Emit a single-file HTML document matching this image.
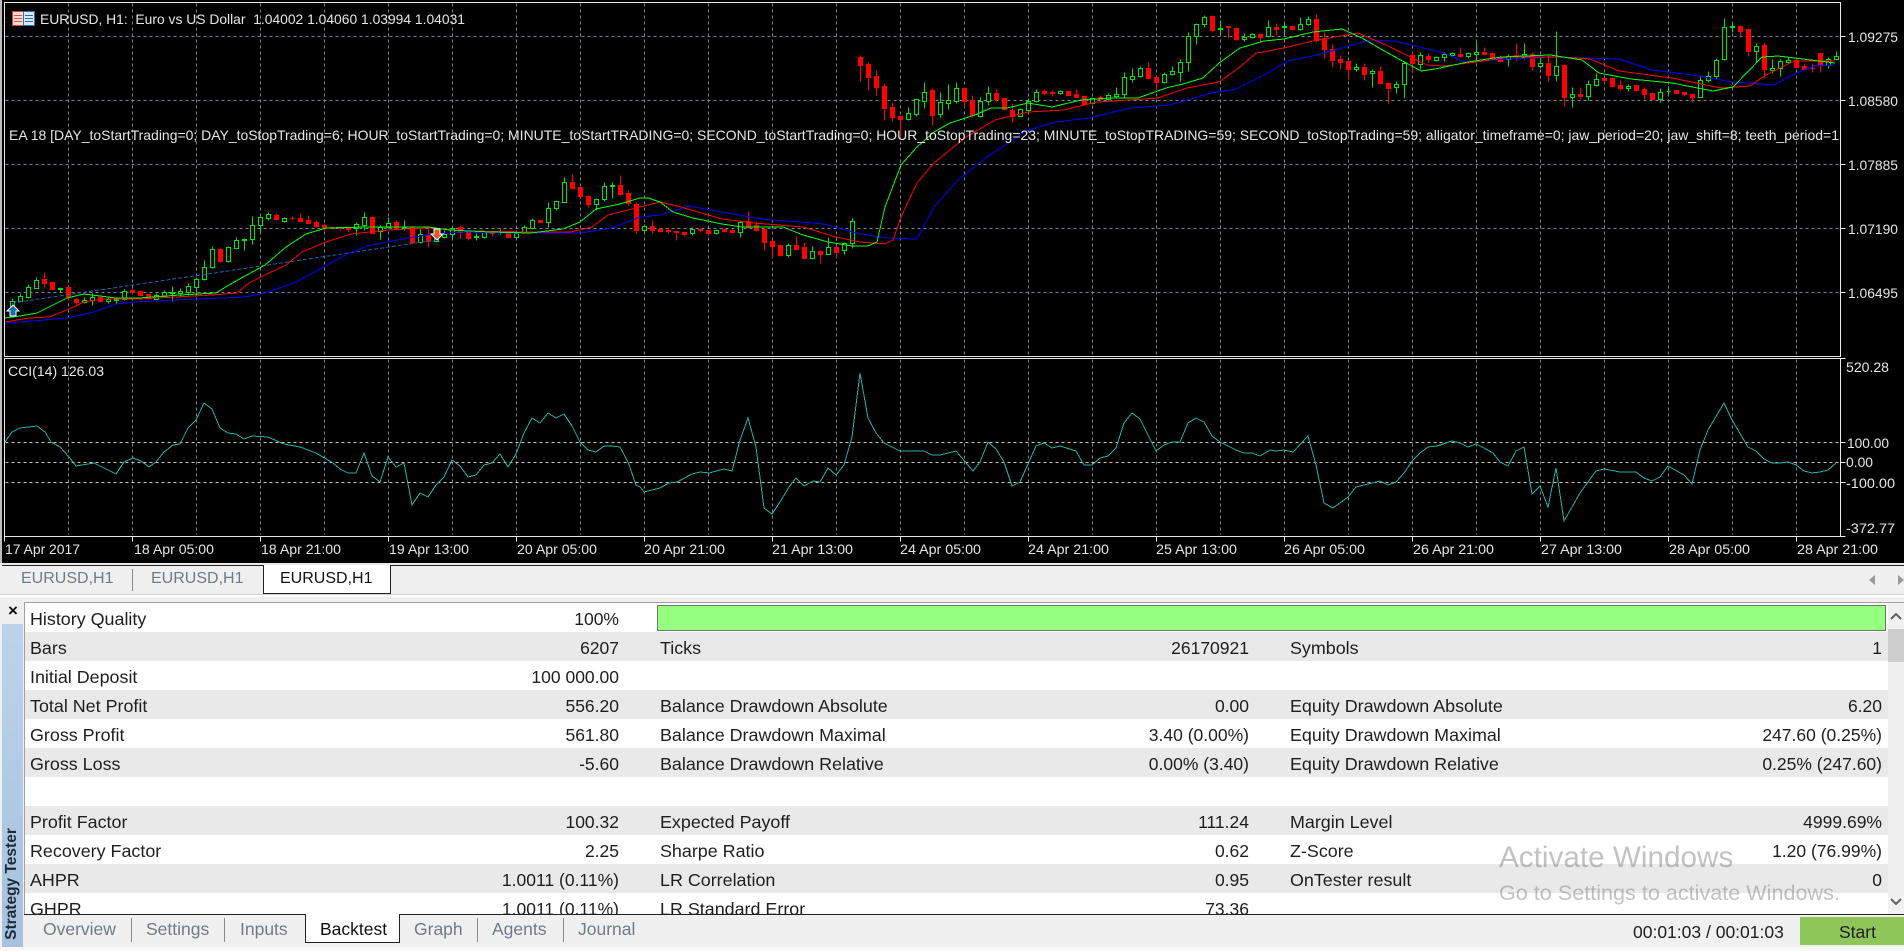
<!DOCTYPE html>
<html lang="en"><head><meta charset="utf-8"><title>Strategy Tester</title>
<style>
html,body{margin:0;padding:0;width:1904px;height:951px;overflow:hidden;background:#f0f0f0;font-family:"Liberation Sans",sans-serif}
#chart{position:absolute;left:0;top:0}
#chart polyline{shape-rendering:crispEdges}
.band{position:absolute;left:25px;width:1863px;height:29px}
.g{background:#e9e9e9}
.t{position:absolute;font-size:17.9px;line-height:20px;color:#1e1e1e;white-space:nowrap}
.r{text-align:right;font-size:17.5px}
.tab{position:absolute;font-size:17.5px;line-height:20px;color:#6f7b87;white-space:nowrap}
.ct{font-size:16px}
.sep{position:absolute;width:1px;background:#8a8a8a}
</style></head><body>
<svg id="chart" width="1904" height="563" viewBox="0 0 1904 563" xmlns="http://www.w3.org/2000/svg" font-family="Liberation Sans, sans-serif" font-size="14" fill="#e6e6e6">
<rect width="1904" height="563" fill="#000"/>
<rect x="0" y="0" width="2" height="563" fill="#bdbdbd"/>
<g transform="translate(.5 .5)" shape-rendering="crispEdges">
<path fill="none" stroke="#778899" stroke-dasharray="3 3" d="M68 3V356M132 3V356M196 3V356M260 3V356M324 3V356M388 3V356M452 3V356M516 3V356M580 3V356M644 3V356M708 3V356M772 3V356M836 3V356M900 3V356M964 3V356M1028 3V356M1092 3V356M1156 3V356M1220 3V356M1284 3V356M1348 3V356M1412 3V356M1476 3V356M1540 3V356M1604 3V356M1668 3V356M1732 3V356M1796 3V356M5 36H1840M5 100H1840M5 164H1840M5 228H1840M5 292H1840"/>
<path fill="none" stroke="#778899" stroke-dasharray="3 3" d="M68 359V534M132 359V534M196 359V534M260 359V534M324 359V534M388 359V534M452 359V534M516 359V534M580 359V534M644 359V534M708 359V534M772 359V534M836 359V534M900 359V534M964 359V534M1028 359V534M1092 359V534M1156 359V534M1220 359V534M1284 359V534M1348 359V534M1412 359V534M1476 359V534M1540 359V534M1604 359V534M1668 359V534M1732 359V534M1796 359V534"/>
<path fill="none" stroke="#c8c8c8" stroke-dasharray="3 3" d="M5 442H1840M5 462H1840M5 482H1840"/>
<path fill="none" stroke="#e8e8e8" d="M4 2H1840V356H4ZM4 358H1840V536H4ZM1840 36h5M1840 100h5M1840 164h5M1840 228h5M1840 292h5M1840 358h5M1840 442h5M1840 462h5M1840 482h5M1840 536h5M4 536v5M132 536v5M260 536v5M388 536v5M516 536v5M644 536v5M772 536v5M900 536v5M1028 536v5M1156 536v5M1284 536v5M1412 536v5M1540 536v5M1668 536v5M1796 536v5"/>
</g>
<g transform="translate(.5 .5)">
<path fill="none" stroke="#00e600" d="M12 298V310M20 293V302M28 284V298M36 277V288M60 287V292M84 297V303M92 293V305M108 297V303M116 298V304M124 289V300M156 293V299M164 290V297M172 286V301M180 288V297M188 283V295M196 277V295M204 260V280M212 246V268M228 246V262M236 237V249M244 238V250M252 216V244M260 215V233M268 212V220M284 217V222M356 222V235M364 212V230M380 225V239M388 217V228M404 220V230M420 228V243M436 231V242M444 230V238M452 227V237M476 233V240M484 231V238M500 229V234M516 230V237M524 225V233M532 218V229M548 202V227M556 200V210M564 177V202M596 198V210M604 182V201M612 182V198M644 224V232M692 227V235M716 229V234M740 220V237M788 243V257M812 246V259M828 237V254M844 242V254M852 218V248M908 107V120M916 98V116M924 82V108M940 92V117M948 84V109M956 82V103M980 97V117M988 86V105M1020 108V117M1028 98V111M1036 89V102M1060 90V94M1092 97V104M1108 93V100M1116 87V97M1124 72V97M1132 68V82M1140 66V77M1164 72V83M1172 66V75M1180 59V81M1188 32V71M1196 23V44M1204 15V27M1220 20V33M1244 33V41M1252 33V38M1268 20V37M1284 23V33M1300 17V30M1308 16V25M1356 63V71M1372 69V87M1396 81V93M1404 62V98M1420 52V69M1436 56V61M1444 52V61M1452 52V57M1468 52V58M1476 42V58M1508 54V66M1524 43V59M1540 57V68M1556 31V81M1572 87V107M1588 80V100M1596 73V86M1628 84V91M1660 88V102M1668 86V94M1700 75V97M1708 71V82M1716 58V78M1724 18V60M1732 21V32M1756 43V62M1772 59V73M1780 59V76M1788 57V63M1828 57V68M1836 51V60"/>
<path fill="#000" stroke="#00e600" d="M10 301h4V307h-4zM18 296h4V301h-4zM26 287h4V297h-4zM34 280h4V288h-4zM58 288h4V289h-4zM82 300h4V302h-4zM90 297h4V300h-4zM106 299h4V301h-4zM114 299h4V300h-4zM122 291h4V299h-4zM154 295h4V299h-4zM162 292h4V296h-4zM170 292h4V293h-4zM178 291h4V293h-4zM186 286h4V292h-4zM194 279h4V287h-4zM202 267h4V279h-4zM210 249h4V267h-4zM226 247h4V261h-4zM234 240h4V248h-4zM242 239h4V240h-4zM250 225h4V239h-4zM258 217h4V225h-4zM266 214h4V218h-4zM282 218h4V221h-4zM354 224h4V228h-4zM362 217h4V225h-4zM378 227h4V231h-4zM386 223h4V227h-4zM402 227h4V228h-4zM418 234h4V242h-4zM434 233h4V241h-4zM442 234h4V237h-4zM450 228h4V234h-4zM474 236h4V237h-4zM482 232h4V237h-4zM498 232h4V232h-4zM514 233h4V237h-4zM522 227h4V232h-4zM530 220h4V228h-4zM546 208h4V222h-4zM554 201h4V208h-4zM562 182h4V202h-4zM594 199h4V204h-4zM602 186h4V199h-4zM610 185h4V186h-4zM642 226h4V230h-4zM690 229h4V233h-4zM714 230h4V233h-4zM738 222h4V232h-4zM786 245h4V255h-4zM810 251h4V258h-4zM826 247h4V254h-4zM842 243h4V250h-4zM850 221h4V243h-4zM906 113h4V119h-4zM914 99h4V114h-4zM922 92h4V101h-4zM938 102h4V114h-4zM946 100h4V103h-4zM954 88h4V101h-4zM978 101h4V116h-4zM986 93h4V101h-4zM1018 109h4V116h-4zM1026 101h4V110h-4zM1034 92h4V101h-4zM1058 91h4V93h-4zM1090 98h4V103h-4zM1106 95h4V99h-4zM1114 94h4V96h-4zM1122 77h4V94h-4zM1130 76h4V79h-4zM1138 68h4V76h-4zM1162 74h4V82h-4zM1170 71h4V74h-4zM1178 62h4V72h-4zM1186 36h4V62h-4zM1194 24h4V36h-4zM1202 17h4V24h-4zM1218 28h4V29h-4zM1242 37h4V39h-4zM1250 34h4V37h-4zM1266 27h4V36h-4zM1282 26h4V27h-4zM1298 24h4V29h-4zM1306 19h4V24h-4zM1354 67h4V69h-4zM1370 71h4V73h-4zM1394 84h4V87h-4zM1402 63h4V84h-4zM1418 55h4V64h-4zM1434 57h4V60h-4zM1442 54h4V57h-4zM1450 53h4V55h-4zM1466 53h4V56h-4zM1474 52h4V54h-4zM1506 56h4V59h-4zM1522 54h4V57h-4zM1538 63h4V66h-4zM1554 66h4V75h-4zM1570 94h4V97h-4zM1586 84h4V96h-4zM1594 79h4V85h-4zM1626 86h4V88h-4zM1658 92h4V99h-4zM1666 91h4V91h-4zM1698 80h4V97h-4zM1706 76h4V80h-4zM1714 60h4V76h-4zM1722 27h4V59h-4zM1730 26h4V27h-4zM1754 46h4V51h-4zM1770 68h4V70h-4zM1778 61h4V68h-4zM1786 60h4V62h-4zM1826 59h4V65h-4zM1834 56h4V59h-4z"/>
<path fill="#f00" stroke="#f00" d="M44 272V287M42 279h4V283h-4zM52 282V290M50 282h4V289h-4zM68 287V300M66 287h4V297h-4zM76 298V306M74 299h4V302h-4zM100 297V301M98 297h4V301h-4zM132 289V293M130 290h4V292h-4zM140 290V296M138 291h4V295h-4zM148 293V299M146 294h4V298h-4zM220 248V262M218 249h4V261h-4zM276 213V220M274 215h4V219h-4zM292 216V220M290 218h4V218h-4zM300 213V222M298 218h4V221h-4zM308 215V223M306 220h4V223h-4zM316 220V227M314 222h4V226h-4zM324 223V230M322 225h4V228h-4zM332 226V229M330 227h4V228h-4zM340 227V230M338 228h4V228h-4zM348 227V232M346 228h4V229h-4zM370 217h4V233h-4zM396 220V230M394 222h4V228h-4zM412 227V243M410 227h4V242h-4zM428 228V247M426 235h4V241h-4zM460 225V238M458 227h4V232h-4zM468 232V240M466 232h4V238h-4zM492 230V236M490 232h4V233h-4zM508 231V238M506 232h4V237h-4zM538 220h4V222h-4zM572 174V189M570 182h4V188h-4zM580 187V197M578 187h4V196h-4zM588 195V207M586 196h4V204h-4zM620 175V195M618 185h4V194h-4zM628 190V205M626 193h4V203h-4zM636 202V233M634 204h4V230h-4zM652 220V233M650 226h4V230h-4zM660 228V232M658 229h4V231h-4zM668 227V233M666 230h4V231h-4zM676 231V240M674 231h4V232h-4zM684 231V236M682 232h4V234h-4zM700 228V232M698 229h4V230h-4zM708 229V235M706 230h4V233h-4zM724 228V232M722 229h4V231h-4zM732 229V233M730 230h4V232h-4zM748 211V228M746 221h4V227h-4zM756 221V231M754 225h4V230h-4zM764 228V250M762 229h4V242h-4zM772 240V257M770 241h4V246h-4zM780 245V256M778 245h4V255h-4zM796 236V250M794 245h4V249h-4zM804 242V259M802 247h4V258h-4zM820 250V263M818 251h4V254h-4zM836 245V257M834 247h4V252h-4zM860 55V81M858 57h4V65h-4zM868 62V90M866 64h4V77h-4zM876 70V95M874 76h4V87h-4zM884 83V120M882 86h4V108h-4zM892 102V121M890 107h4V117h-4zM900 116V137M898 116h4V119h-4zM932 88V125M930 90h4V115h-4zM964 87V107M962 88h4V101h-4zM972 95V117M970 100h4V115h-4zM996 89V102M994 93h4V99h-4zM1004 98V110M1002 98h4V109h-4zM1012 103V122M1010 110h4V116h-4zM1044 89V95M1042 91h4V93h-4zM1052 90V96M1050 92h4V93h-4zM1068 91V96M1066 91h4V95h-4zM1076 89V97M1074 94h4V97h-4zM1084 95V105M1082 96h4V104h-4zM1100 95V100M1098 97h4V99h-4zM1148 62V79M1146 68h4V78h-4zM1156 76V90M1154 77h4V82h-4zM1212 15V32M1210 16h4V30h-4zM1228 26V38M1226 26h4V27h-4zM1236 27V40M1234 28h4V39h-4zM1260 33V41M1258 34h4V37h-4zM1276 23V35M1274 27h4V29h-4zM1292 25V30M1290 26h4V29h-4zM1316 14V42M1314 19h4V40h-4zM1324 32V58M1322 38h4V49h-4zM1332 44V67M1330 49h4V60h-4zM1340 55V69M1338 59h4V62h-4zM1348 61V79M1346 61h4V69h-4zM1364 63V80M1362 67h4V74h-4zM1380 66V84M1378 71h4V83h-4zM1388 82V103M1386 83h4V88h-4zM1412 52V73M1410 55h4V63h-4zM1428 53V62M1426 56h4V59h-4zM1460 47V57M1458 54h4V56h-4zM1484 47V54M1482 52h4V54h-4zM1492 52V58M1490 53h4V57h-4zM1500 55V62M1498 57h4V61h-4zM1516 43V60M1514 55h4V56h-4zM1532 52V70M1530 54h4V66h-4zM1548 55V81M1546 63h4V75h-4zM1564 64V106M1562 65h4V97h-4zM1580 87V99M1578 94h4V96h-4zM1604 77V83M1602 78h4V80h-4zM1612 77V87M1610 78h4V86h-4zM1620 80V90M1618 85h4V88h-4zM1636 84V91M1634 85h4V90h-4zM1644 87V99M1642 89h4V94h-4zM1652 92V99M1650 93h4V99h-4zM1674 90h4V93h-4zM1684 91V96M1682 92h4V94h-4zM1692 93V102M1690 94h4V97h-4zM1740 25V37M1738 26h4V31h-4zM1748 29V56M1746 29h4V51h-4zM1764 42V78M1762 45h4V69h-4zM1796 58V68M1794 60h4V67h-4zM1804 63V70M1802 66h4V69h-4zM1812 63V72M1810 68h4V68h-4zM1820 53V72M1818 53h4V65h-4z"/>
</g>
<polyline fill="none" stroke="#1c5fa8" stroke-width="1" stroke-dasharray="4 2" points="12,303 436,240"/>
<polyline fill="none" stroke="#0000ff" stroke-width="1" points="5,323 20,322 67,318 94,312 116,304 135,302 175,300 245,297 265,293 294,283 322,268 347,254 367,246 408,238 433,234 461,232 510,233 580,233 612,228 640,217 660,215 689,206 722,212 762,219 824,224 852,232 885,238 917,239 934,207 958,180 987,157 1028,130 1056,122 1089,118 1130,108 1170,105 1211,93 1236,89 1260,77 1264,75 1288,61 1317,55 1370,40 1395,41 1444,53 1464,62 1509,59 1550,57 1619,59 1652,70 1692,75 1733,82 1774,85 1798,72 1815,66 1835,65"/>
<polyline fill="none" stroke="#ff0000" stroke-width="1" points="5,322 29,318 49,317 67,310 84,302 102,299 139,299 175,297 212,295 237,293 249,283 265,275 286,265 302,252 326,242 351,234 388,230 429,228 469,231 531,232 571,232 592,227 608,215 628,210 640,207 660,202 681,207 722,219 754,223 803,227 836,237 860,242 885,244 893,240 901,217 917,183 934,163 966,137 995,120 1028,112 1064,110 1097,102 1130,100 1158,98 1187,88 1219,82 1240,67 1256,53 1264,52 1288,47 1317,40 1358,33 1386,45 1427,65 1444,66 1476,62 1509,57 1562,57 1590,59 1619,71 1672,78 1721,88 1750,86 1766,75 1794,61 1835,61"/>
<polyline fill="none" stroke="#00ff00" stroke-width="1" points="5,318 20,316 37,313 53,305 67,298 84,294 100,296 116,298 139,298 180,295 216,293 229,285 245,276 265,265 286,247 306,234 326,228 367,227 429,227 449,230 490,232 531,233 563,229 580,222 596,209 620,204 640,198 648,198 660,202 673,212 693,218 722,224 742,227 783,227 803,235 828,242 852,246 868,246 877,242 885,207 901,165 917,147 934,132 950,123 975,115 991,108 1007,108 1028,103 1052,107 1081,100 1109,98 1138,98 1166,88 1183,84 1203,78 1219,63 1240,48 1264,41 1284,39 1313,32 1342,29 1362,38 1386,52 1421,71 1435,69 1468,62 1501,57 1550,55 1582,60 1599,73 1631,79 1672,83 1713,91 1733,87 1762,57 1778,56 1803,59 1835,63"/>
<polyline fill="none" stroke="#20b2aa" stroke-width="1" points="5,442 12,432 20,428 37,426 45,432 51,442 60,447 69,457 76,466 94,463 116,474 124,462 133,458 141,461 149,467 156,462 164,452 173,445 180,444 188,428 196,420 204,403 212,409 220,428 228,433 236,434 244,439 252,436 268,437 284,444 300,447 316,453 333,463 340,469 348,473 356,473 364,453 372,476 380,482 388,457 396,467 404,463 412,505 420,493 428,497 436,485 444,477 452,460 460,466 468,477 476,475 484,465 492,463 500,454 508,467 516,454 524,433 532,418 540,423 548,413 556,418 564,414 572,426 580,442 588,450 596,452 604,446 612,446 620,447 628,462 636,485 640,487 644,492 660,488 669,483 677,482 692,474 700,472 709,473 724,469 732,471 740,440 748,418 756,447 764,508 772,514 780,502 789,487 796,478 804,486 813,481 820,482 828,468 836,475 844,465 852,437 860,373 868,418 876,433 884,443 900,451 924,451 932,455 940,455 956,451 973,471 980,462 988,442 996,449 1004,462 1012,486 1020,482 1036,446 1044,443 1052,448 1060,446 1076,451 1084,465 1092,465 1100,458 1108,456 1116,448 1124,423 1132,413 1140,419 1156,451 1164,445 1172,442 1180,442 1188,423 1196,418 1204,422 1212,436 1220,442 1236,450 1244,453 1252,453 1260,456 1270,450 1276,451 1284,450 1293,452 1308,436 1316,465 1324,503 1333,508 1348,497 1356,487 1364,485 1380,481 1388,485 1396,482 1404,473 1413,460 1420,453 1428,447 1437,446 1452,441 1460,443 1468,447 1476,444 1484,448 1493,453 1500,462 1508,466 1516,451 1524,447 1532,494 1540,486 1548,507 1556,468 1564,521 1580,493 1596,471 1604,469 1620,472 1636,472 1644,478 1652,481 1660,477 1668,466 1684,475 1692,484 1700,450 1708,430 1724,403 1732,420 1748,447 1756,451 1764,459 1772,463 1780,463 1788,462 1796,465 1804,471 1812,473 1820,472 1828,470 1836,463"/>
<polygon points="13,305 19,311 16,311 16,316 10,316 10,311 7,311" fill="#1a6cb0" stroke="#fff" stroke-width="1"/>
<polygon points="434,229 440,229 440,234 443,234 437,240 431,234 434,234" fill="#e2562c" stroke="#fff" stroke-width="1"/>
<g>
<rect x="12.5" y="11.5" width="11" height="14" fill="#f6dcd8" stroke="#d8402e"/>
<rect x="23.5" y="11.5" width="11" height="14" fill="#dbe6f2" stroke="#2a70b0"/>
<path d="M14 15.5H22M14 18.5H22M14 21.5H22" stroke="#e0503c"/><path d="M25 15.5H33M25 18.5H33M25 21.5H33" stroke="#2a70b0"/>
</g>
<text x="40" y="24" textLength="425" lengthAdjust="spacingAndGlyphs" xml:space="preserve">EURUSD, H1:  Euro vs US Dollar  1.04002 1.04060 1.03994 1.04031</text>
<text x="9" y="140" textLength="1830" lengthAdjust="spacingAndGlyphs">EA 18 [DAY_toStartTrading=0; DAY_toStopTrading=6; HOUR_toStartTrading=0; MINUTE_toStartTRADING=0; SECOND_toStartTrading=0; HOUR_toStopTrading=23; MINUTE_toStopTRADING=59; SECOND_toStopTrading=59; alligator_timeframe=0; jaw_period=20; jaw_shift=8; teeth_period=1</text>
<text x="8" y="376" textLength="96" lengthAdjust="spacingAndGlyphs">CCI(14) 126.03</text>
<g>
<text x="1848" y="42" textLength="50" lengthAdjust="spacingAndGlyphs">1.09275</text>
<text x="1848" y="106" textLength="50" lengthAdjust="spacingAndGlyphs">1.08580</text>
<text x="1848" y="170" textLength="50" lengthAdjust="spacingAndGlyphs">1.07885</text>
<text x="1848" y="234" textLength="50" lengthAdjust="spacingAndGlyphs">1.07190</text>
<text x="1848" y="298" textLength="50" lengthAdjust="spacingAndGlyphs">1.06495</text>
<text x="1846" y="372" textLength="43" lengthAdjust="spacingAndGlyphs">520.28</text>
<text x="1847" y="448" textLength="42" lengthAdjust="spacingAndGlyphs">100.00</text>
<text x="1846" y="467" textLength="27" lengthAdjust="spacingAndGlyphs">0.00</text>
<text x="1846" y="488" textLength="49" lengthAdjust="spacingAndGlyphs">-100.00</text>
<text x="1846" y="533" textLength="49" lengthAdjust="spacingAndGlyphs">-372.77</text>
</g>
<g>
<text x="5" y="554" textLength="75" lengthAdjust="spacingAndGlyphs">17 Apr 2017</text>
<text x="134" y="554" textLength="80" lengthAdjust="spacingAndGlyphs">18 Apr 05:00</text>
<text x="261" y="554" textLength="80" lengthAdjust="spacingAndGlyphs">18 Apr 21:00</text>
<text x="389" y="554" textLength="80" lengthAdjust="spacingAndGlyphs">19 Apr 13:00</text>
<text x="517" y="554" textLength="80" lengthAdjust="spacingAndGlyphs">20 Apr 05:00</text>
<text x="644" y="554" textLength="81" lengthAdjust="spacingAndGlyphs">20 Apr 21:00</text>
<text x="772" y="554" textLength="81" lengthAdjust="spacingAndGlyphs">21 Apr 13:00</text>
<text x="900" y="554" textLength="81" lengthAdjust="spacingAndGlyphs">24 Apr 05:00</text>
<text x="1028" y="554" textLength="81" lengthAdjust="spacingAndGlyphs">24 Apr 21:00</text>
<text x="1156" y="554" textLength="81" lengthAdjust="spacingAndGlyphs">25 Apr 13:00</text>
<text x="1284" y="554" textLength="81" lengthAdjust="spacingAndGlyphs">26 Apr 05:00</text>
<text x="1413" y="554" textLength="81" lengthAdjust="spacingAndGlyphs">26 Apr 21:00</text>
<text x="1541" y="554" textLength="81" lengthAdjust="spacingAndGlyphs">27 Apr 13:00</text>
<text x="1669" y="554" textLength="81" lengthAdjust="spacingAndGlyphs">28 Apr 05:00</text>
<text x="1797" y="554" textLength="81" lengthAdjust="spacingAndGlyphs">28 Apr 21:00</text>
</g>
</svg>

<!-- chart tab strip -->
<div style="position:absolute;left:0;top:563px;width:1904px;height:2px;background:#e8e8e8"></div>
<div style="position:absolute;left:2px;top:565px;width:1902px;height:1px;background:#222"></div>
<div style="position:absolute;left:0;top:594px;width:1904px;height:1px;background:#cfcfcf"></div>
<div style="position:absolute;left:0;top:595px;width:1904px;height:2px;background:#fff"></div>
<div style="position:absolute;left:263px;top:565px;width:126px;height:28px;background:#fff;border:1px solid #222;border-top:none"></div>
<div class="sep" style="left:132px;top:569px;height:22px"></div>
<div class="tab ct" style="left:21px;top:569px">EURUSD,H1</div>
<div class="tab ct" style="left:151px;top:569px">EURUSD,H1</div>
<div class="tab ct" style="left:280px;top:569px;color:#111">EURUSD,H1</div>
<svg style="position:absolute;left:1866px;top:573px" width="38" height="14"><path d="M9 2V12L3 7Z" fill="#9a9a9a"/><path d="M32 2V12L38 7Z" fill="#9a9a9a"/></svg>

<!-- side strip -->
<div style="position:absolute;left:13px;top:601px;font-size:17px;line-height:20px;font-weight:bold;color:#111;transform:translateX(-50%)">×</div>
<div style="position:absolute;left:2px;top:624px;width:21px;height:323px;background:linear-gradient(#bcd3ea,#a6c1de)"></div>
<div style="position:absolute;left:12px;top:884px;font-size:15.5px;line-height:18px;font-weight:bold;color:#1c2a38;white-space:nowrap;transform:translate(-50%,-50%) rotate(-90deg)">Strategy Tester</div>

<!-- report panel -->
<div style="position:absolute;left:24px;top:602px;width:1880px;height:312px;background:#fff;overflow:hidden">
<div style="position:absolute;left:0;top:0;width:1880px;height:1px;background:#a0a0a0"></div>
<div style="position:absolute;left:0;top:0;width:1px;height:312px;background:#a0a0a0"></div>
</div>
<div class="band g" style="top:632px"></div>
<div class="band g" style="top:690px"></div>
<div class="band g" style="top:748px"></div>
<div class="band g" style="top:806px"></div>
<div class="band g" style="top:864px"></div>
<div style="position:absolute;left:657px;top:605px;width:1227px;height:24px;background:#96ff80;border:1px solid #6a7a6a"></div>

<div style="position:absolute;left:0;top:0;width:1904px;height:914px;overflow:hidden">
<div class="t" style="left:30px;top:609px">History Quality</div><div class="t r" style="right:1285px;top:609px">100%</div>
<div class="t" style="left:30px;top:638px">Bars</div><div class="t r" style="right:1285px;top:638px">6207</div>
<div class="t" style="left:660px;top:638px">Ticks</div><div class="t r" style="right:655px;top:638px">26170921</div>
<div class="t" style="left:1290px;top:638px">Symbols</div><div class="t r" style="right:22px;top:638px">1</div>
<div class="t" style="left:30px;top:667px">Initial Deposit</div><div class="t r" style="right:1285px;top:667px">100 000.00</div>
<div class="t" style="left:30px;top:696px">Total Net Profit</div><div class="t r" style="right:1285px;top:696px">556.20</div>
<div class="t" style="left:660px;top:696px">Balance Drawdown Absolute</div><div class="t r" style="right:655px;top:696px">0.00</div>
<div class="t" style="left:1290px;top:696px">Equity Drawdown Absolute</div><div class="t r" style="right:22px;top:696px">6.20</div>
<div class="t" style="left:30px;top:725px">Gross Profit</div><div class="t r" style="right:1285px;top:725px">561.80</div>
<div class="t" style="left:660px;top:725px">Balance Drawdown Maximal</div><div class="t r" style="right:655px;top:725px">3.40 (0.00%)</div>
<div class="t" style="left:1290px;top:725px">Equity Drawdown Maximal</div><div class="t r" style="right:22px;top:725px">247.60 (0.25%)</div>
<div class="t" style="left:30px;top:754px">Gross Loss</div><div class="t r" style="right:1285px;top:754px">-5.60</div>
<div class="t" style="left:660px;top:754px">Balance Drawdown Relative</div><div class="t r" style="right:655px;top:754px">0.00% (3.40)</div>
<div class="t" style="left:1290px;top:754px">Equity Drawdown Relative</div><div class="t r" style="right:22px;top:754px">0.25% (247.60)</div>
<div class="t" style="left:30px;top:812px">Profit Factor</div><div class="t r" style="right:1285px;top:812px">100.32</div>
<div class="t" style="left:660px;top:812px">Expected Payoff</div><div class="t r" style="right:655px;top:812px">111.24</div>
<div class="t" style="left:1290px;top:812px">Margin Level</div><div class="t r" style="right:22px;top:812px">4999.69%</div>
<div class="t" style="left:30px;top:841px">Recovery Factor</div><div class="t r" style="right:1285px;top:841px">2.25</div>
<div class="t" style="left:660px;top:841px">Sharpe Ratio</div><div class="t r" style="right:655px;top:841px">0.62</div>
<div class="t" style="left:1290px;top:841px">Z-Score</div><div class="t r" style="right:22px;top:841px">1.20 (76.99%)</div>
<div class="t" style="left:30px;top:870px">AHPR</div><div class="t r" style="right:1285px;top:870px">1.0011 (0.11%)</div>
<div class="t" style="left:660px;top:870px">LR Correlation</div><div class="t r" style="right:655px;top:870px">0.95</div>
<div class="t" style="left:1290px;top:870px">OnTester result</div><div class="t r" style="right:22px;top:870px">0</div>
<div class="t" style="left:30px;top:899px">GHPR</div><div class="t r" style="right:1285px;top:899px">1.0011 (0.11%)</div>
<div class="t" style="left:660px;top:899px">LR Standard Error</div><div class="t r" style="right:655px;top:899px">73.36</div>
</div>

<!-- scrollbar -->
<div style="position:absolute;left:1888px;top:603px;width:16px;height:311px;background:#f0f0f0"></div>
<div style="position:absolute;left:1888px;top:629px;width:16px;height:33px;background:#cdcdcd"></div>
<svg style="position:absolute;left:1888px;top:611px" width="16" height="12"><path d="M3 8L8 3L13 8" fill="none" stroke="#606060" stroke-width="2"/></svg>
<svg style="position:absolute;left:1888px;top:896px" width="16" height="12"><path d="M3 3L8 8L13 3" fill="none" stroke="#606060" stroke-width="2"/></svg>

<!-- activation watermark -->
<div style="position:absolute;left:1499px;top:841px;font-size:29.7px;line-height:34px;color:rgba(120,120,120,.45);white-space:nowrap">Activate Windows</div>
<div style="position:absolute;left:1499px;top:880px;font-size:21.6px;line-height:26px;color:rgba(120,120,120,.45);white-space:nowrap">Go to Settings to activate Windows.</div>

<!-- bottom tabs -->
<div style="position:absolute;left:24px;top:914px;width:1880px;height:33px;background:#f0f0f0;border-top:1px solid #222;box-sizing:border-box"></div>
<div style="position:absolute;left:0;top:947px;width:1904px;height:4px;background:#f8f8f8"></div>
<div style="position:absolute;left:305px;top:914px;width:93px;height:28px;background:#fff;border:1px solid #222;border-top:none"></div>
<div class="tab" style="left:43px;top:919px">Overview</div>
<div class="sep" style="left:131px;top:918px;height:24px"></div>
<div class="tab" style="left:146px;top:919px">Settings</div>
<div class="sep" style="left:224px;top:918px;height:24px"></div>
<div class="tab" style="left:240px;top:919px">Inputs</div>
<div class="tab" style="left:320px;top:919px;color:#111">Backtest</div>
<div class="tab" style="left:414px;top:919px">Graph</div>
<div class="sep" style="left:477px;top:918px;height:24px"></div>
<div class="tab" style="left:492px;top:919px">Agents</div>
<div class="sep" style="left:563px;top:918px;height:24px"></div>
<div class="tab" style="left:578px;top:919px">Journal</div>
<div class="t r" style="left:1633px;top:922px">00:01:03 / 00:01:03</div>
<div style="position:absolute;left:1800px;top:917px;width:104px;height:28px;background:#8fc65a"></div>
<div class="t r" style="left:1839px;top:922px">Start</div>
</body></html>
